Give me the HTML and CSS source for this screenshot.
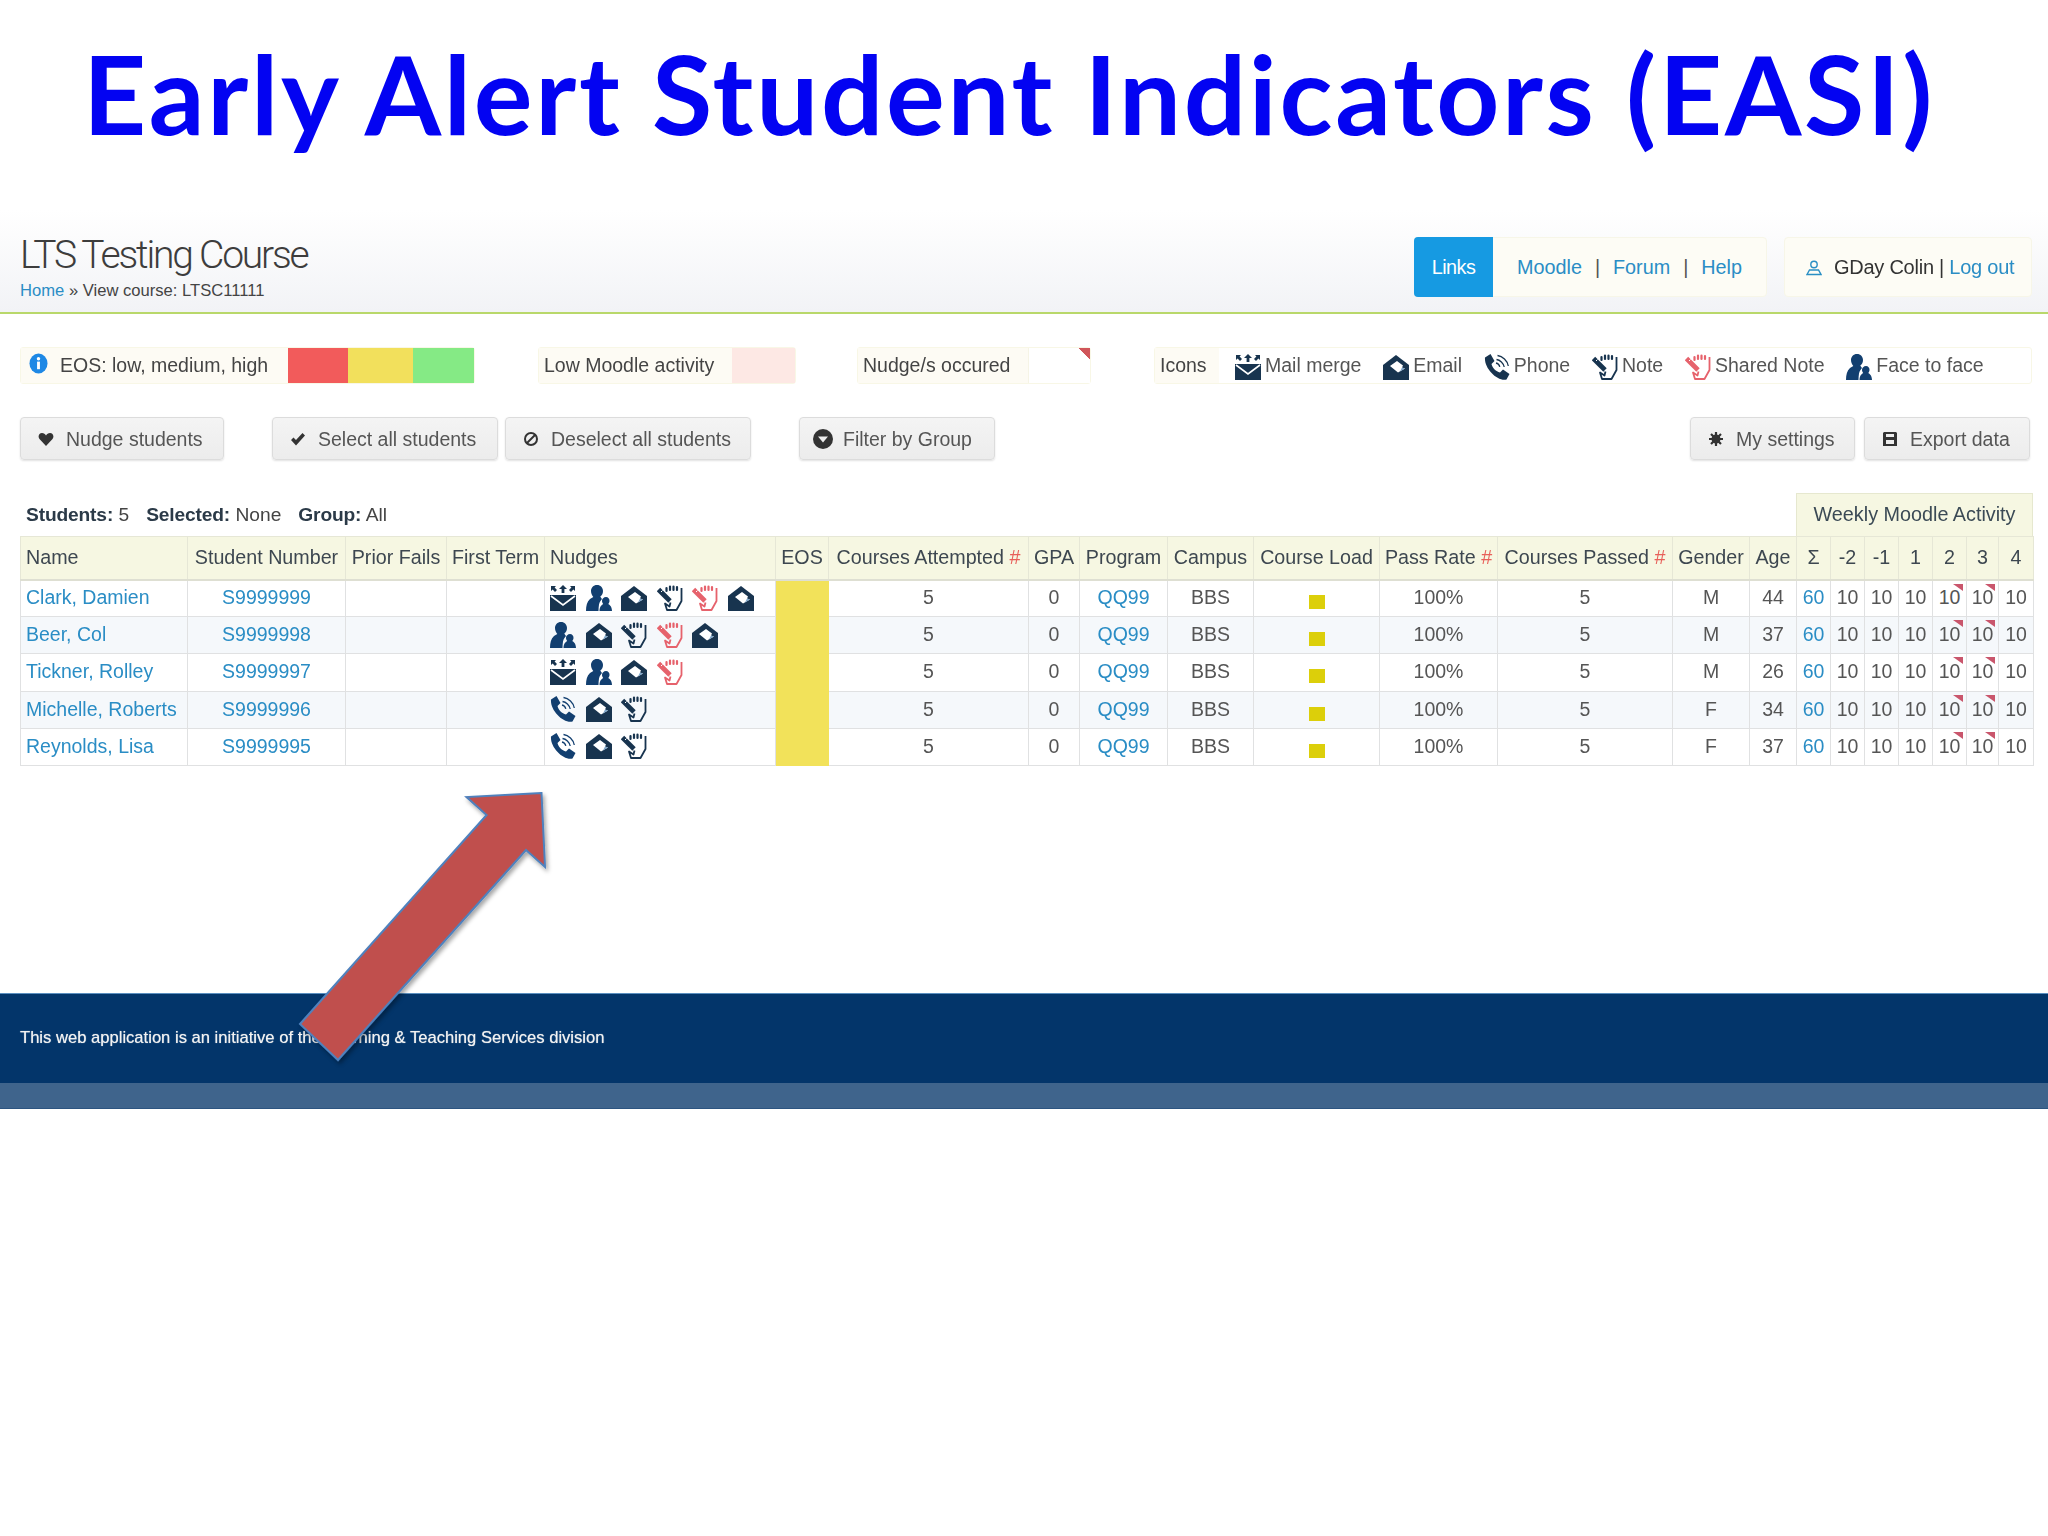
FILE: index.html
```html
<!DOCTYPE html>
<html lang="en">
<head>
<meta charset="utf-8">
<title>Early Alert Student Indicators (EASI)</title>
<link rel="stylesheet" href="styles.css">
</head>
<body>
<svg class="defs" width="0" height="0" aria-hidden="true">
  <symbol id="i-merge" viewBox="0 0 26 26">
    <path fill="currentColor" d="M0 10h26v16H0z"/>
    <path fill="none" stroke="#fff" stroke-width="1.6" d="M1 11l12 9 12-9"/>
    <path fill="currentColor" d="M13 0l4 4h-2.6v4h-2.8V4H9zM1 1h5L4.600 2.500 7 5 5 7 2.600 4.500 1 6zM25 1h-5l1.400 1.500L19 5l2 2 2.400-2.500L25 6z"/>
  </symbol>
  <symbol id="i-face" viewBox="0 0 26 26">
    <path fill="currentColor" d="M11 0c3.600 0 6 2.700 6 6 0 2.400-1 4.400-2.700 5.500.4 1 1 1.800 1.700 2.500-1 1.200-2.500 3-3 5.500-.3 2-.5 4.500-.5 6.500H0c0-5 1-9.500 4-12 1-.7 2.300-1.300 3.300-2C6 10.400 5 8.300 5 6 5 2.700 7.400 0 11 0z"/>
    <path fill="currentColor" d="M20 12c2.200 0 3.500 1.800 3.500 3.800 0 1.300-.5 2.400-1.200 3.100.4.600 3.700 1.500 3.700 7.100H13.500c0-5.600 3.300-6.500 3.700-7.100-.7-.7-1.200-1.800-1.200-3.100 0-2 1.800-3.800 4-3.800z"/>
  </symbol>
  <symbol id="i-mail" viewBox="0 0 26 26">
    <path fill="currentColor" d="M0 11L13 1l13 10v15H0z"/>
    <path fill="#fff" d="M7 12l7-5 6 4.500-1 2 3 1-7 4z"/>
    <path fill="#7fa6c9" d="M19 13.500l3 1-5 3z"/>
  </symbol>
  <symbol id="i-note" viewBox="0 0 26 26">
    <path fill="none" stroke="currentColor" stroke-width="1.800" stroke-linejoin="round" d="M24.500 3v13l-5 9H10L8 18.500l4.500 3 1-4"/>
    <path fill="none" stroke="currentColor" stroke-width="2.200" stroke-linecap="round" d="M9.500 6V3M13 5V1.500M16.500 5V1.500M20 5V2"/>
    <path fill="none" stroke="currentColor" stroke-width="4.800" d="M1.500 4.500l11.500 11.500"/>
    <path fill="none" stroke="#fff" stroke-width="1" d="M5.500 5.500l-1.500 1.500"/>
  </symbol>
  <symbol id="i-phone" viewBox="0 0 26 26">
    <path fill="currentColor" d="M1 3.500L6.500 0 10.500 7 7.500 10c1 4 4.500 7.500 8.500 8.500l3-3 6.500 4.500-3 5.500C13 27.500 0 14 1 3.500z"/>
    <path fill="none" stroke="currentColor" stroke-width="1.300" d="M13.500 1.500c5 .6 10 5 10.800 10.500M12.500 5.500c3.500.5 7 3.500 7.700 7.500M12 9c1.800.4 3.300 1.800 3.800 3.800"/>
  </symbol>
</svg>

<div class="slide-title"><h1>Early Alert Student Indicators (EASI)</h1></div>

<div class="app">
  <header class="app-header">
    <div class="brand">
      <div class="course">LTS Testing Course</div>
      <div class="crumb"><a href="#">Home</a> » View course: LTSC11111</div>
    </div>
    <nav class="links-box">
      <span class="links-tag">Links</span>
      <div class="links-list"><a href="#">Moodle</a><i>|</i><a href="#">Forum</a><i>|</i><a href="#">Help</a></div>
    </nav>
    <div class="user-box">
      <svg class="user-ic" viewBox="0 0 16 16"><circle cx="8" cy="5" r="3.200" fill="none" stroke="#2a8fc4" stroke-width="1.400"/><path d="M1 15l2.500-4.500h9L15 15z" fill="none" stroke="#2a8fc4" stroke-width="1.400"/></svg>
      <span>GDay Colin <b>|</b> <a href="#">Log out</a></span>
    </div>
  </header>

  <section class="legend">
    <div class="lg lg-eos">
      <span class="lg-label"><svg class="info" viewBox="0 0 20 22"><ellipse cx="10" cy="11" rx="9.500" ry="10.500" fill="#1e88e5"/><rect x="8.500" y="9" width="3" height="8" fill="#fff"/><circle cx="10" cy="6" r="1.800" fill="#fff"/></svg>EOS: low, medium, high</span>
      <span class="sw sw-red"></span><span class="sw sw-yel"></span><span class="sw sw-grn"></span>
    </div>
    <div class="lg lg-low"><span class="lg-label">Low Moodle activity</span><span class="sw-pink"></span></div>
    <div class="lg lg-nudge"><span class="lg-label">Nudge/s occured</span><span class="sw-flag"></span></div>
    <div class="lg lg-icons">
      <span class="lg-label">Icons</span>
      <div class="key">
        <span class="key-item"><svg class="ic"><use href="#i-merge"/></svg>Mail merge</span>
        <span class="key-item"><svg class="ic"><use href="#i-mail"/></svg>Email</span>
        <span class="key-item"><svg class="ic"><use href="#i-phone"/></svg>Phone</span>
        <span class="key-item"><svg class="ic"><use href="#i-note"/></svg>Note</span>
        <span class="key-item"><svg class="ic red"><use href="#i-note"/></svg>Shared Note</span>
        <span class="key-item"><svg class="ic blue"><use href="#i-face"/></svg>Face to face</span>
      </div>
    </div>
  </section>

  <section class="toolbar">
    <button class="btn b-nudge"><svg class="bi" viewBox="0 0 16 16"><path d="M8 15L1.500 8C-.5 5.500 1 2 4 2c1.800 0 3.200 1 4 2.500C8.800 3 10.200 2 12 2c3 0 4.500 3.500 2.500 6z"/></svg>Nudge students</button>
    <button class="btn b-select"><svg class="bi" viewBox="0 0 16 16"><path d="M1 9l2.500-2.500L6 9l6.500-7L15 4.500 6 14.500z"/></svg>Select all students</button>
    <button class="btn b-deselect"><svg class="bi" viewBox="0 0 16 16"><circle cx="8" cy="8" r="6" fill="none" stroke="#333" stroke-width="2"/><path d="M3.500 12.500l9-9" stroke="#333" stroke-width="2"/></svg>Deselect all students</button>
    <button class="btn b-filter"><svg class="bi bi-l" viewBox="0 0 20 20"><circle cx="10" cy="10" r="10"/><path d="M5 7.500h10L10 13.500z" fill="#eee"/></svg>Filter by Group</button>
    <button class="btn b-settings"><svg class="bi" viewBox="0 0 16 16"><circle cx="8" cy="8" r="3" fill="none" stroke="#333" stroke-width="3"/><path d="M8 1v14M1 8h14M3 3l10 10M13 3L3 13" stroke="#333" stroke-width="2.200"/></svg>My settings</button>
    <button class="btn b-export"><svg class="bi" viewBox="0 0 16 16"><path d="M2 1h12l1 1v13H1V2z"/><path d="M4 3h8v3H4zM4 9h8v4H4z" fill="#eee"/></svg>Export data</button>
  </section>

  <section class="summary">
    <p><b>Students:</b> 5<span class="sp"></span><b>Selected:</b> None<span class="sp"></span><b>Group:</b> All</p>
    <div class="weekly">Weekly Moodle Activity</div>
  </section>

  <table class="grid">
    <colgroup>
      <col class="c-name"><col class="c-num"><col class="c-prior"><col class="c-first"><col class="c-nudges"><col class="c-eos"><col class="c-att"><col class="c-gpa"><col class="c-prog"><col class="c-camp"><col class="c-load"><col class="c-rate"><col class="c-pass"><col class="c-gen"><col class="c-age"><col class="c-w"><col class="c-w"><col class="c-w"><col class="c-w"><col class="c-w"><col class="c-w2"><col class="c-w3">
    </colgroup>
    <thead>
      <tr>
        <th class="l">Name</th><th>Student Number</th><th>Prior Fails</th><th>First Term</th><th class="l">Nudges</th><th>EOS</th><th>Courses Attempted <em>#</em></th><th>GPA</th><th>Program</th><th>Campus</th><th>Course Load</th><th>Pass Rate <em>#</em></th><th>Courses Passed <em>#</em></th><th>Gender</th><th>Age</th><th>Σ</th><th>-2</th><th>-1</th><th>1</th><th>2</th><th>3</th><th>4</th>
      </tr>
    </thead>
    <tbody>
      <tr>
        <td class="l"><a href="#">Clark, Damien</a></td><td><a href="#">S9999999</a></td><td></td><td></td>
        <td class="nudges"><svg class="ic"><use href="#i-merge"/></svg><svg class="ic blue"><use href="#i-face"/></svg><svg class="ic"><use href="#i-mail"/></svg><svg class="ic"><use href="#i-note"/></svg><svg class="ic red"><use href="#i-note"/></svg><svg class="ic"><use href="#i-mail"/></svg></td>
        <td class="eos"></td><td>5</td><td>0</td><td><a href="#">QQ99</a></td><td>BBS</td><td><span class="load"></span></td><td>100%</td><td>5</td><td>M</td><td>44</td><td><a href="#">60</a></td><td>10</td><td>10</td><td>10</td><td class="flag">10</td><td class="flag">10</td><td>10</td>
      </tr>
      <tr>
        <td class="l"><a href="#">Beer, Col</a></td><td><a href="#">S9999998</a></td><td></td><td></td>
        <td class="nudges"><svg class="ic blue"><use href="#i-face"/></svg><svg class="ic"><use href="#i-mail"/></svg><svg class="ic"><use href="#i-note"/></svg><svg class="ic red"><use href="#i-note"/></svg><svg class="ic"><use href="#i-mail"/></svg></td>
        <td class="eos"></td><td>5</td><td>0</td><td><a href="#">QQ99</a></td><td>BBS</td><td><span class="load"></span></td><td>100%</td><td>5</td><td>M</td><td>37</td><td><a href="#">60</a></td><td>10</td><td>10</td><td>10</td><td class="flag">10</td><td class="flag">10</td><td>10</td>
      </tr>
      <tr>
        <td class="l"><a href="#">Tickner, Rolley</a></td><td><a href="#">S9999997</a></td><td></td><td></td>
        <td class="nudges"><svg class="ic"><use href="#i-merge"/></svg><svg class="ic blue"><use href="#i-face"/></svg><svg class="ic"><use href="#i-mail"/></svg><svg class="ic red"><use href="#i-note"/></svg></td>
        <td class="eos"></td><td>5</td><td>0</td><td><a href="#">QQ99</a></td><td>BBS</td><td><span class="load"></span></td><td>100%</td><td>5</td><td>M</td><td>26</td><td><a href="#">60</a></td><td>10</td><td>10</td><td>10</td><td class="flag">10</td><td class="flag">10</td><td>10</td>
      </tr>
      <tr>
        <td class="l"><a href="#">Michelle, Roberts</a></td><td><a href="#">S9999996</a></td><td></td><td></td>
        <td class="nudges"><svg class="ic blue"><use href="#i-phone"/></svg><svg class="ic"><use href="#i-mail"/></svg><svg class="ic"><use href="#i-note"/></svg></td>
        <td class="eos"></td><td>5</td><td>0</td><td><a href="#">QQ99</a></td><td>BBS</td><td><span class="load"></span></td><td>100%</td><td>5</td><td>F</td><td>34</td><td><a href="#">60</a></td><td>10</td><td>10</td><td>10</td><td class="flag">10</td><td class="flag">10</td><td>10</td>
      </tr>
      <tr>
        <td class="l"><a href="#">Reynolds, Lisa</a></td><td><a href="#">S9999995</a></td><td></td><td></td>
        <td class="nudges"><svg class="ic blue"><use href="#i-phone"/></svg><svg class="ic"><use href="#i-mail"/></svg><svg class="ic"><use href="#i-note"/></svg></td>
        <td class="eos"></td><td>5</td><td>0</td><td><a href="#">QQ99</a></td><td>BBS</td><td><span class="load"></span></td><td>100%</td><td>5</td><td>F</td><td>37</td><td><a href="#">60</a></td><td>10</td><td>10</td><td>10</td><td class="flag">10</td><td class="flag">10</td><td>10</td>
      </tr>
    </tbody>
  </table>

  <footer class="app-footer">
    <div class="foot-main">This web application is an initiative of the Learning &amp; Teaching Services division</div>
    <div class="foot-strip"></div>
  </footer>
</div>

<svg class="arrow" viewBox="0 0 270 290" aria-hidden="true">
  <defs><filter id="sh" x="-10%" y="-10%" width="130%" height="130%"><feDropShadow dx="2" dy="3" stdDeviation="2" flood-color="#000" flood-opacity=".35"/></filter></defs>
  <path d="M261.500 13L186.500 17 206.600 35 20 244 58 280 246 70 265 87z" fill="#c0504d" stroke="#4f81bd" stroke-width="2" filter="url(#sh)"/>
</svg>
</body>
</html>
```

FILE: styles.css
```css
* { box-sizing: border-box; }
html, body { margin: 0; padding: 0; background: #fff; }
body {
  position: relative;
  width: 2048px;
  min-height: 1536px;
  font-family: "Liberation Sans", Arial, sans-serif;
  color: #555;
  overflow: hidden;
}
a { color: #2a8dc5; text-decoration: none; }
.defs { position: absolute; }

/* Slide title */
.slide-title { height: 210px; padding: 27px 0 0 83px; }
.slide-title h1 {
  margin: 0;
  font-family: Lato, "Liberation Sans", sans-serif;
  font-weight: 700;
  font-size: 110px;
  line-height: 130px;
  letter-spacing: 2.700px;
  color: #0303f2;
  white-space: nowrap;
}

.app { filter: blur(.55px); }

/* App header */
.app-header {
  display: flex;
  align-items: flex-start;
  height: 104px;
  padding: 27px 16px 0 20px;
  background: linear-gradient(#fff, #f2f3f6);
  border-bottom: 2px solid #b9d86a;
}
.brand { flex: 1; margin-top: -4px; }
.course {
  font-family: Roboto, "Liberation Sans", sans-serif;
  font-weight: 300;
  font-size: 39px;
  line-height: 44px;
  letter-spacing: -2.200px;
  color: #3d3d3d;
}
.crumb { margin-top: 4px; font-size: 16.600px; line-height: 20px; color: #444; }
.links-box {
  display: flex;
  width: 353px;
  height: 60px;
  margin-right: 17px;
  background: #fdfcf5;
  border: 1px solid #f7f6e8;
  border-radius: 4px;
  font-size: 19.800px;
}
.links-tag {
  width: 79px;
  margin: -1px 0 -1px -1px;
  background: #169ae2;
  border-radius: 4px 0 0 4px;
  color: #fff;
  text-align: center;
  line-height: 60px;
  letter-spacing: -.5px;
}
.links-list { display: flex; align-items: center; padding-left: 24px; line-height: 60px; }
.links-list i { font-style: normal; color: #555; margin: 0 13px; }
.user-box {
  display: flex;
  align-items: center;
  width: 248px;
  height: 60px;
  padding-left: 21px;
  background: #fdfcf5;
  border: 1px solid #f7f6e8;
  border-radius: 4px;
  font-size: 20px;
  color: #333;
  letter-spacing: -.25px;
  white-space: nowrap;
}
.user-box b { font-weight: 400; }
.user-ic { width: 16px; height: 17px; margin-right: 12px; }

/* Legend */
.legend { display: flex; height: 37px; margin: 33px 16px 0 20px; font-size: 19.500px; }
.lg {
  display: flex;
  align-items: stretch;
  background: #fff;
  border: 1px solid #f8f7e6;
  border-radius: 3px;
  line-height: 35px;
  color: #444;
  white-space: nowrap;
}
.lg-label { display: flex; align-items: center; background: #fdfbf4; padding: 0 5px; }
.lg-eos { width: 455px; }
.lg-eos .lg-label { width: 268px; padding-left: 8px; }
.info { width: 19px; height: 21px; margin: -5px 12px 0 0; }
.sw { height: 100%; }
.sw-red { width: 60px; background: #f25b5b; }
.sw-yel { width: 65px; background: #f2e05c; }
.sw-grn { width: 61px; background: #85ea85; }
.lg-low { width: 258px; margin-left: 63px; }
.lg-low .lg-label { width: 193px; }
.sw-pink { flex: 1; background: #fde8e4; }
.lg-nudge { width: 234px; margin-left: 61px; }
.lg-nudge .lg-label { width: 171px; border-right: 1px solid #f6f4e6; }
.sw-flag {
  flex: 1;
  background: linear-gradient(225deg, #d0555a 8px, transparent 8.500px) right top / 12px 12px no-repeat #fff;
}
.lg-icons { width: 878px; margin-left: 63px; }
.lg-icons .lg-label { width: 64px; }
.key { display: flex; align-items: center; padding-left: 16px; margin-top: -1px; }
.key-item { display: flex; align-items: center; margin-right: 21.800px; line-height: 26px; color: #555; }
.key-item .ic { margin-right: 4px; margin-top: 3px; }

/* Icons */
.ic { display: inline-block; width: 26px; height: 26px; color: #18344f; flex: none; }
.ic.blue { color: #123f70; }
.ic.red { color: #e6626c; }

/* Toolbar */
.toolbar { display: flex; height: 43px; margin: 33px 18px 0 20px; }
.btn {
  display: flex;
  align-items: center;
  height: 43px;
  margin: 0;
  padding: 1px 0 0 17px;
  background: linear-gradient(#f4f4f4, #ececec);
  border: 1px solid #dcdcdc;
  border-radius: 4px;
  box-shadow: 0 1px 2px rgba(0,0,0,.12);
  font-family: inherit;
  font-size: 19.500px;
  color: #555;
  white-space: nowrap;
}
.bi { width: 16px; height: 16px; margin-right: 12px; fill: #333; flex: none; }
.bi-l { width: 20px; height: 20px; margin-right: 10px; }
.b-nudge { width: 204px; }
.b-select { width: 226px; margin-left: 48px; }
.b-deselect { width: 246px; margin-left: 7px; }
.b-filter { width: 196px; margin-left: 48px; padding-left: 13px; }
.b-settings { width: 165px; margin-left: auto; }
.b-export { width: 166px; margin-left: 9px; }

/* Summary row */
.summary { display: flex; justify-content: space-between; height: 43px; margin: 33px 15px 0 20px; }
.summary p { margin: 0; padding-left: 6px; font-size: 19.200px; line-height: 44px; color: #444; }
.summary b { color: #2b3a48; letter-spacing: -.15px; }
.sp { display: inline-block; width: 17px; }
.weekly {
  width: 237px;
  background: #f6f7e2;
  border: 1px solid #e6e8cf;
  border-bottom: 0;
  font-size: 19.800px;
  line-height: 41px;
  text-align: center;
  color: #3b4a55;
}

/* Table */
.grid {
  width: 2013px;
  margin-left: 20px;
  border-collapse: collapse;
  table-layout: fixed;
  font-size: 19.500px;
}
.c-name { width: 167px; } .c-num { width: 158px; } .c-prior { width: 101px; } .c-first { width: 98px; }
.c-nudges { width: 231px; } .c-eos { width: 53px; } .c-att { width: 200px; } .c-gpa { width: 51px; }
.c-prog { width: 88px; } .c-camp { width: 86px; } .c-load { width: 126px; } .c-rate { width: 118px; }
.c-pass { width: 175px; } .c-gen { width: 77px; } .c-age { width: 47px; } .c-w { width: 34px; }
.c-w2 { width: 32px; } .c-w3 { width: 35px; }
.grid th, .grid td {
  padding: 0 0 1px;
  border: 1px solid #e0e1e2;
  text-align: center;
  white-space: nowrap;
}
.grid th {
  height: 43px;
  background: #f6f7e2;
  border-color: #e6e7d6;
  border-bottom: 2px solid #dedfd2;
  font-size: 19.700px;
  font-weight: 400;
  color: #3d4750;
}
.grid th em { font-style: normal; color: #e8605a; }
.grid td { height: 37.200px; background: #fff; }
.grid tbody tr:nth-child(even) td { background: #f5f8fb; }
.grid .l { text-align: left; padding-left: 5px; }
.grid .nudges { padding-left: 5px; text-align: left; font-size: 0; }
.nudges .ic { margin-right: 9.600px; vertical-align: middle; }
.grid tbody td.eos, .grid tbody tr:nth-child(even) td.eos { background: #f2e25a; border-color: #f2e25a; }
.load { display: inline-block; width: 16px; height: 14px; margin-top: 6px; background: #dccf0a; vertical-align: middle; }
.grid td.flag { position: relative; }
.grid td.flag::after {
  content: "";
  position: absolute;
  top: 3px;
  right: 3px;
  border-top: 7px solid #c9566c;
  border-left: 10px solid transparent;
}

/* Footer */
.app-footer { margin-top: 227px; }
.foot-main {
  height: 90px;
  padding-left: 20px;
  background: #03356a;
  border-top: 1px solid #5a8fc0;
  font-size: 16.600px;
  line-height: 88px;
  color: #f2f2f2;
  text-shadow: 0 0 1px rgba(255,255,255,.7);
}
.foot-strip { height: 26px; background: #3f648c; border-bottom: 1px solid #2c5480; }

/* Arrow overlay */
.arrow {
  position: absolute;
  left: 280px;
  top: 780px;
  width: 270px;
  height: 290px;
  overflow: visible;
}
```
